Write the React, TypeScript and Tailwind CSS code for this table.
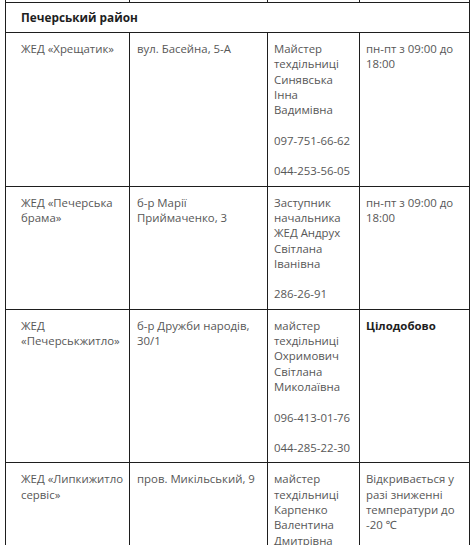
const rows = [
  {
    name: 'ЖЕД «Хрещатик»',
    address: 'вул. Басейна, 5-А',
    contact: ['Майстер', 'техдільниці', 'Синявська', 'Інна', 'Вадимівна', '', '097-751-66-62', '', '044-253-56-05'],
    hours: ['пн-пт з 09:00 до', '18:00'],
    bold: false,
  },
  {
    name: 'ЖЕД «Печерська брама»',
    address: 'б-р Марії Приймаченко, 3',
    contact: ['Заступник', 'начальника', 'ЖЕД Андрух', 'Світлана', 'Іванівна', '', '286-26-91'],
    hours: ['пн-пт з 09:00 до', '18:00'],
    bold: false,
  },
  {
    name: 'ЖЕД «Печерськжитло»',
    address: 'б-р Дружби народів, 30/1',
    contact: ['майстер', 'техдільниці', 'Охримович', 'Світлана', 'Миколаївна', '', '096-413-01-76', '', '044-285-22-30'],
    hours: ['Цілодобово'],
    bold: true,
  },
  {
    name: 'ЖЕД «Липкижитло сервіс»',
    address: 'пров. Микільський, 9',
    contact: ['майстер', 'техдільниці', 'Карпенко', 'Валентина', 'Дмитрівна', '', '044-280-38-04'],
    hours: ['Відкривається у', 'разі зниженні', 'температури до', '-20 ℃', '', 'Працює з 09:00'],
    bold: false,
  },
];

function Lines({ items }: { items: string[] }) {
  return (
    <>
      {items.map((l, i) => (
        <div key={i} className="min-h-[15.3px] whitespace-nowrap">{l}</div>
      ))}
    </>
  );
}

const cell = 'border border-[#1e1e1e] pt-[8px] pb-[7px] align-top';

export default function App() {
  return (
    <div
      className="h-[545px] w-[472px] overflow-hidden bg-white"
      style={{ fontFamily: '"Open Sans", "Noto Sans", sans-serif' }}
    >
      <div className="-mt-[18px] pl-[5px]">
        <table className="w-[464px] table-fixed border-collapse text-[11.4px] leading-[15.3px] text-[#575757]">
          <colgroup>
            <col className="w-[124px]" />
            <col className="w-[138px]" />
            <col className="w-[92px]" />
            <col className="w-[110px]" />
          </colgroup>
          <tbody>
            <tr className="h-[20px]">
              <td className="border border-[#1e1e1e]"></td>
              <td className="border border-[#1e1e1e]"></td>
              <td className="border border-[#1e1e1e]"></td>
              <td className="border border-[#1e1e1e]"></td>
            </tr>
            <tr className="h-[30px]">
              <td colSpan={4} className="border border-[#1e1e1e] pl-[15px] align-middle text-[11.8px] font-bold text-[#1e1e1e]">
                Печерський район
              </td>
            </tr>
            {rows.map((r) => (
              <tr key={r.name}>
                <td className={`${cell} pl-[15px] pr-[3px]`}>{r.name}</td>
                <td className={`${cell} pl-[7px] pr-[4px]`}>{r.address}</td>
                <td className={`${cell} pl-[6px] pr-[2px]`}>
                  <Lines items={r.contact} />
                </td>
                <td className={r.bold ? `${cell} pl-[6px] pr-[2px] font-bold text-[#1e1e1e]` : `${cell} pl-[6px] pr-[2px]`}>
                  <Lines items={r.hours} />
                </td>
              </tr>
            ))}
          </tbody>
        </table>
      </div>
    </div>
  );
}
